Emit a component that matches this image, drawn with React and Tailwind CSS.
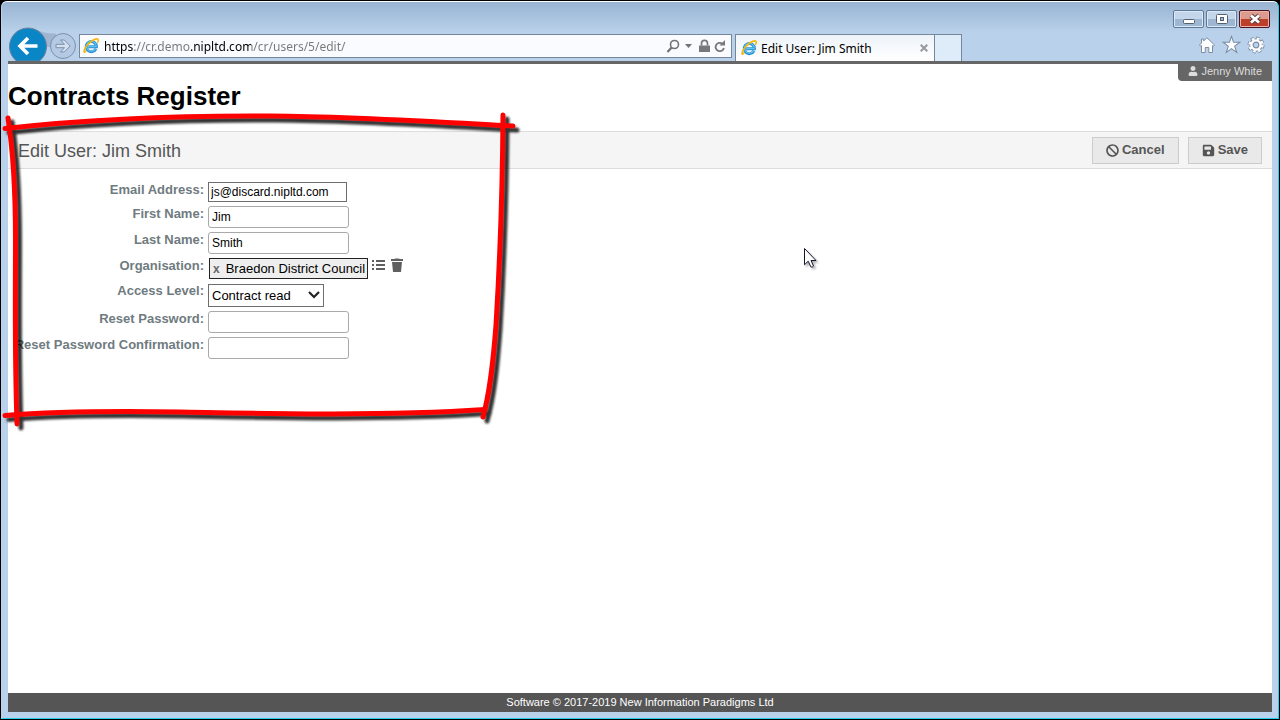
import { FaBan, FaSave, FaUser } from 'react-icons/fa'

const TEXT_ROWS = {
  first: { id: 'first-name', label: 'First Name:', value: 'Jim', type: 'text' },
  last: { id: 'last-name', label: 'Last Name:', value: 'Smith', type: 'text' },
  reset: { id: 'reset-password', label: 'Reset Password:', value: '', type: 'password' },
  confirm: { id: 'reset-confirm', label: 'Reset Password Confirmation:', value: '', type: 'password' },
}

function IeLogo() {
  return (
    <svg className="size-4 shrink-0" viewBox="0 0 16 16" fill="none">
      <path d="M12.9 10.8A5.1 5.1 0 1 1 13.4 8.7H5.2" stroke="#2a8fd0" strokeWidth="3" />
      <path d="M12.6 10.6A4.9 4.9 0 1 1 13.2 8.6H5" stroke="#5fc3f0" strokeWidth="1.2" />
      <path
        d="M2.6 13.2C.4 15.8.4 12.4 3.2 8.4 6.4 4 12 .2 14.4 1c1.2.5.8 2.200.3 3.200"
        stroke="#f3b90f"
        strokeWidth="1.6"
        strokeLinecap="round"
      />
    </svg>
  )
}

function WindowButtons() {
  const plain =
    'flex h-[18px] w-[31px] items-center justify-center rounded-xs border border-[#5f7896] bg-linear-to-b from-[#c3d6ea] from-50% to-[#9db7d2] to-50% shadow-[inset_0_0_0_1px_#dbe8f5]'
  return (
    <div className="flex h-[26px] items-end justify-end gap-0.5 pr-0.5">
      <button className={plain} aria-label="Minimise">
        <svg className="h-3 w-3" viewBox="0 0 12 12">
          <rect x=".5" y="6.500" width="11" height="4" rx="1" fill="#fff" stroke="#54606e" />
        </svg>
      </button>
      <button className={plain} aria-label="Maximise">
        <svg className="h-3 w-3" viewBox="0 0 12 12">
          <rect x=".5" y="1.500" width="11" height="9" rx="1" fill="#fff" stroke="#54606e" />
          <rect x="4.500" y="4.500" width="3" height="3" fill="#9db7d2" stroke="#54606e" />
        </svg>
      </button>
      <button
        className="flex h-[18px] w-[31px] items-center justify-center rounded-xs border border-[#4f1420] bg-linear-to-b from-[#dd9a8e] from-50% to-[#be3f29] to-50% shadow-[inset_0_0_0_1px_#e9b3aa]"
        aria-label="Close"
      >
        <svg className="h-3 w-3" viewBox="0 0 12 12">
          <path d="M2 2.500l8 7M10 2.500l-8 7" stroke="#54404a" strokeWidth="4.800" />
          <path d="M2 2.500l8 7M10 2.500l-8 7" stroke="#fff" strokeWidth="2.800" />
        </svg>
      </button>
    </div>
  )
}

function NavButtons() {
  return (
    <div className="flex shrink-0 items-center">
      <button aria-label="Back">
        <svg className="block h-[34px] w-10 overflow-visible" viewBox="0 0 40 34">
          <path d="M24 1Q36 7 48 6.500V20H30z" fill="#9fb5d0" />
          <path d="M8.500 34A18.500 18.500 0 1 1 31.500 34z" fill="#0a86c6" stroke="#6a8099" />
          <path d="M29.500 19H13M20 11l-8 8 8 8" fill="none" stroke="#fff" strokeWidth="3.600" />
        </svg>
      </button>
      <button aria-label="Forward">
        <svg className="block h-[34px] w-[31px]" viewBox="0 0 31 34">
          <circle cx="15" cy="19" r="12.500" fill="#b4c9e4" stroke="#7d90a9" />
          <path
            d="M8 17.300h8.500l-4-4.300h3.800l5.900 6-5.900 6h-3.800l4-4.300H8z"
            fill="#d3e0f1"
            stroke="#7d8fa8"
          />
        </svg>
      </button>
    </div>
  )
}

function AddressBar() {
  return (
    <div className="mt-[7px] mr-[3px] flex h-6 flex-1 items-center border border-[#76879b] bg-[#f9fbfe] pr-[5px] pl-[3px]">
      <IeLogo />
      <input
        type="text"
        aria-label="Address"
        defaultValue="https://cr.demo.nipltd.com/cr/users/5/edit/"
        className="ml-[5px] min-w-0 flex-1 bg-[linear-gradient(90deg,#000_29px,#777_29px,#777_86px,#000_86px,#000_147px,#777_147px)] bg-clip-text pt-0.5 font-['Noto_Sans','Open_Sans',sans-serif] text-xs text-transparent outline-none"
      />
      <button aria-label="Search">
        <svg className="h-4 w-[14px]" viewBox="0 0 14 16" fill="none" stroke="#6f7276">
          <circle cx="8.500" cy="6.500" r="4" strokeWidth="1.600" />
          <path d="M5.600 9.500L1.500 14" strokeWidth="2.200" />
        </svg>
      </button>
      <button aria-label="Show address list" className="px-[5px]">
        <svg className="h-1 w-[7px]" viewBox="0 0 7 4">
          <path d="M0 0h7L3.500 4z" fill="#6f7276" />
        </svg>
      </button>
      <button aria-label="Security report" className="px-0.5">
        <svg className="h-4 w-[11px]" viewBox="0 0 11 16">
          <path d="M0 7.500h11V14H0z" fill="#77787a" />
          <path d="M2.500 7.500V5.300a3 3 0 0 1 6 0V7.500" fill="none" stroke="#77787a" strokeWidth="1.700" />
        </svg>
      </button>
      <button aria-label="Refresh" className="pl-0.5">
        <svg className="h-4 w-3" viewBox="0 0 12 16">
          <path d="M8.300 5.600A4.200 4.200 0 1 0 9.900 10" fill="none" stroke="#77787a" strokeWidth="1.800" />
          <path d="M5.500 7.500h5.500V2z" fill="#77787a" />
        </svg>
      </button>
    </div>
  )
}

function TabStrip() {
  return (
    <div className="flex items-end">
      <div className="flex h-[27px] w-[200px] items-center border-x border-t border-[#76879b] bg-linear-to-b from-[#edf3fa] to-white pr-1 pl-[5px]">
        <IeLogo />
        <span className="ml-1 flex-1 pt-px font-['Noto_Sans','Open_Sans',sans-serif] text-xs whitespace-nowrap">
          Edit User: Jim Smith
        </span>
        <button aria-label="Close tab" className="p-0.5">
          <svg className="size-2" viewBox="0 0 8 8">
            <path d="M.7.7l6.600 6.600M7.300.7L.7 7.300" stroke="#97999c" strokeWidth="2" />
          </svg>
        </button>
      </div>
      <button aria-label="New tab" className="h-[27px] w-[27px] border-t border-r border-[#76879b] bg-[#deebf9]" />
      <div className="mb-2 ml-auto flex gap-2 pr-2">
        <button aria-label="Home">
          <svg className="block size-4 overflow-visible" viewBox="0 0 16 16">
            <path
              d="M8 .8L15.500 8l-1.200 1.300-.8-.7v6.900H9.800v-5H6.200v5H2.500V8.600l-.8.7L.5 8l2-2V2h2.200v1.900z"
              fill="#fff"
              stroke="#7c8da3"
            />
          </svg>
        </button>
        <button aria-label="Favourites">
          <svg className="block size-[17px] overflow-visible" viewBox="0 0 16 16">
            <path d="M8 .3l1.900 5.600h5.900L11 9.500l1.900 6L8 11.900l-4.900 3.600L5 9.500.2 5.900h5.900z" fill="#fff" stroke="#7c8da3" />
          </svg>
        </button>
        <button aria-label="Tools">
          <svg className="block size-4 overflow-visible" viewBox="0 0 16 16" fill="none">
            <circle cx="8" cy="8" r="6.700" stroke="#7c8da3" strokeWidth="3.600" strokeDasharray="3 2.260" />
            <circle cx="8" cy="8" r="4.500" stroke="#7c8da3" strokeWidth="4.400" />
            <circle cx="8" cy="8" r="6.400" stroke="#fff" strokeWidth="2.400" strokeDasharray="2.500 2.530" />
            <circle cx="8" cy="8" r="4.600" stroke="#fff" strokeWidth="2.400" />
          </svg>
        </button>
      </div>
    </div>
  )
}

function Row({ id, label, children }) {
  return (
    <div className="flex items-start gap-1">
      <label
        htmlFor={id}
        className="flex w-[196px] shrink-0 justify-end text-[13px] leading-4 font-bold whitespace-nowrap text-[#6f7b80]"
      >
        {label}
      </label>
      {children}
    </div>
  )
}

function TextRow({ row }) {
  return (
    <Row id={row.id} label={row.label}>
      <input
        id={row.id}
        type={row.type}
        defaultValue={row.value}
        className="h-[22px] w-[141px] rounded-[3px] border border-[#a9a9a9] bg-white px-[3px] text-xs text-black"
      />
    </Row>
  )
}

function UserForm() {
  return (
    <form className="flex flex-col gap-1 pt-[13px]">
      <Row id="email" label="Email Address:">
        <input
          id="email"
          type="text"
          defaultValue="js@discard.nipltd.com"
          className="h-5 w-[139px] border border-[#6e6e6e] bg-white px-0.5 text-xs text-black"
        />
      </Row>
      <TextRow row={TEXT_ROWS.first} />
      <TextRow row={TEXT_ROWS.last} />
      <Row id="organisation" label="Organisation:">
        <div className="flex items-start gap-1 pl-px">
          <div className="flex h-[21px] w-[159px] items-center border border-[#222] bg-[#eee] text-[13px] whitespace-nowrap text-black">
            <button type="button" id="organisation" className="px-[3px] text-xs font-bold text-[#666]">
              x
            </button>
            <span className="ml-[3px]">Braedon District Council</span>
          </div>
          <button type="button" aria-label="Choose organisation">
            <svg className="block h-[14px] w-[14px]" viewBox="0 0 14 14">
              <path d="M0 2h2v2H0zM4 2h9v2H4zM0 6h2v2H0zM4 6h9v2H4zM0 10h2v2H0zM4 10h9v2H4z" fill="#606060" />
            </svg>
          </button>
          <button type="button" aria-label="Clear organisation">
            <svg className="block h-[14px] w-[14px]" viewBox="0 0 14 14">
              <path d="M1 1h3.500l.5-.6h4l.5.6H13v2H1zM2 4h10l-1 10H3z" fill="#606060" />
            </svg>
          </button>
        </div>
      </Row>
      <Row id="access-level" label="Access Level:">
        <div className="relative pt-px">
          <select
            id="access-level"
            className="block h-[23px] w-[116px] appearance-none border border-[#6e6e6e] bg-white px-[3px] text-[13px] text-black"
          >
            <option>Contract read</option>
          </select>
          <svg className="pointer-events-none absolute top-2 right-1 h-2 w-3" viewBox="0 0 12 8">
            <path d="M1 1l5 5 5-5" fill="none" stroke="#222" strokeWidth="2.200" />
          </svg>
        </div>
      </Row>
      <TextRow row={TEXT_ROWS.reset} />
      <TextRow row={TEXT_ROWS.confirm} />
    </form>
  )
}

// hand-drawn red frame laid over the form
function Highlight() {
  return (
    <svg
      className="pointer-events-none absolute -top-px -left-px h-[440px] w-[540px]"
      viewBox="0 0 540 440"
      fill="none"
    >
      <g
        stroke="#f00"
        strokeWidth="5"
        strokeLinecap="round"
        className="[filter:drop-shadow(4px_4px_1px_rgba(0,0,0,0.8))]"
      >
        <path d="M5 128.500C90 119 190 115.500 270 116S430 121.500 513 126" />
        <path d="M8 118C13 150 15.500 190 15.500 240S14.500 350 17 424" />
        <path d="M503 115C502.500 190 500 260 496 325 493 365 490 392 483 417" />
        <path d="M5 415.500C60 411 120 411 180 412S370 417 485 409.500" />
      </g>
    </svg>
  )
}

function Cursor() {
  return (
    <svg className="pointer-events-none absolute top-[247px] left-[803px] h-6 w-4 overflow-visible" viewBox="0 0 16 24">
      <path
        d="M.5.5v16.300l3.700-3.600 2.600 5.600q1.300 1 2.700-.8l-2.500-5.500h5z"
        fill="#fff"
        stroke="#15152a"
        className="[filter:drop-shadow(2px_2px_1px_rgba(0,0,0,0.3))]"
      />
    </svg>
  )
}

export default function App() {
  return (
    <div className="relative flex min-h-screen flex-col overflow-hidden border border-black bg-black font-['Liberation_Sans',Arial,sans-serif]">
      <div className="flex flex-1 flex-col rounded-t-md border border-x-[#b9d1ea] border-t-white border-r-[#22cdee] border-b-[#22cdee] bg-[#b9d1ea] bg-linear-to-b from-[#98b4d2] to-[#b9d1ea] to-[30px] px-1.5 pb-1.5">
        <header>
          <WindowButtons />
          <div className="-mt-px grid grid-cols-[727fr_537fr]">
            <div className="flex">
              <NavButtons />
              <AddressBar />
            </div>
            <TabStrip />
          </div>
        </header>

        <main className="flex flex-1 flex-col border-t-3 border-[#666] bg-white">
          <div className="flex h-[67px] items-start justify-between">
            <h1 className="pt-4 text-[26px] leading-8 font-bold text-black">Contracts Register</h1>
            <a
              href="#account"
              className="flex h-[17px] items-center gap-[3px] rounded-bl-[4px] bg-[#666] px-2.5 pb-[3px] text-[11px] leading-[14px] text-[#ddd]"
            >
              <FaUser className="size-2.5" />
              Jenny White
            </a>
          </div>

          <div className="flex h-[38px] items-center justify-between border-y border-[#ddd] bg-[#f5f5f5] px-2.5">
            <h2 className="pt-px text-lg text-[#555]">Edit User: Jim Smith</h2>
            <div className="flex gap-[9px]">
              <button className="flex h-[27px] items-center gap-[3px] border border-[#ccc] bg-[#e9e9e9] px-[13px] text-[13px] font-bold text-[#555]">
                <FaBan className="size-[13px]" />
                Cancel
              </button>
              <button className="flex h-[27px] items-center gap-[3px] border border-[#ccc] bg-[#e9e9e9] px-[13px] text-[13px] font-bold text-[#555]">
                <FaSave className="size-[13px]" />
                Save
              </button>
            </div>
          </div>

          <UserForm />

          <footer className="mt-auto bg-[#555] text-center text-[11px] leading-[19px] text-white">
            Software © 2017-2019 New Information Paradigms Ltd
          </footer>
        </main>
      </div>

      <Highlight />
      <Cursor />
    </div>
  )
}
